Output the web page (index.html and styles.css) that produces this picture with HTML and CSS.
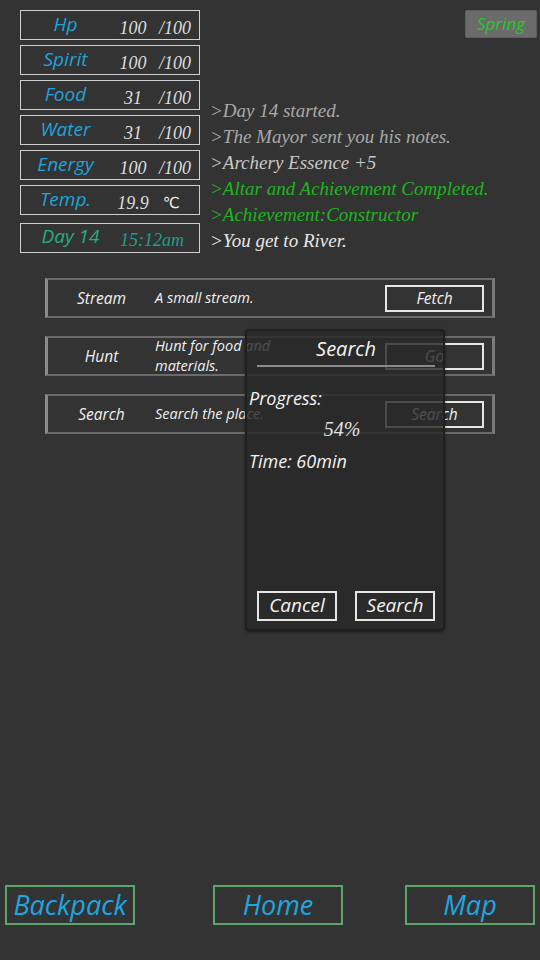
FILE: index.html
```html
<!DOCTYPE html>
<html>
<head>
<meta charset="utf-8">
<link rel="stylesheet" href="styles.css">
</head>
<body>
<div class="page">
  <div class="top">
    <div class="stats">
      <div class="stat"><span class="lbl">Hp</span><span class="val">100</span><span class="max">/100</span></div>
      <div class="stat"><span class="lbl">Spirit</span><span class="val">100</span><span class="max">/100</span></div>
      <div class="stat"><span class="lbl">Food</span><span class="val">31</span><span class="max">/100</span></div>
      <div class="stat"><span class="lbl">Water</span><span class="val">31</span><span class="max">/100</span></div>
      <div class="stat"><span class="lbl">Energy</span><span class="val">100</span><span class="max">/100</span></div>
      <div class="stat"><span class="lbl">Temp.</span><span class="val">19.9</span><span class="unit">℃</span></div>
      <div class="stat day"><span class="dlbl">Day 14</span><span class="time">15:12am</span></div>
    </div>
    <div class="log">
      <div class="ln dim">&gt;Day 14 started.</div>
      <div class="ln dim">&gt;The Mayor sent you his notes.</div>
      <div class="ln mid">&gt;Archery Essence +5</div>
      <div class="ln grn">&gt;Altar and Achievement Completed.</div>
      <div class="ln grn">&gt;Achievement:Constructor</div>
      <div class="ln wht">&gt;You get to River.</div>
    </div>
    <div class="season">Spring</div>
  </div>

  <div class="actions">
    <div class="row"><span class="name">Stream</span><span class="desc">A small stream.</span><span class="btn">Fetch</span></div>
    <div class="row"><span class="name">Hunt</span><span class="desc">Hunt for food and materials.</span><span class="btn">Go</span></div>
    <div class="row"><span class="name">Search</span><span class="desc">Search the place.</span><span class="btn">Search</span></div>
  </div>

  <div class="nav">
    <div class="navbtn">Backpack</div>
    <div class="navbtn home">Home</div>
    <div class="navbtn map">Map</div>
  </div>

  <div class="dialog">
    <div class="dtitle">Search</div>
    <div class="dline">Progress:</div>
    <div class="pct">54%</div>
    <div class="dline">Time: 60min</div>
    <div class="dbtns"><span class="dbtn">Cancel</span><span class="dbtn">Search</span></div>
  </div>
</div>
</body>
</html>
```

FILE: styles.css
```css
html, body {
  margin: 0;
  padding: 0;
  background: #333333;
}
.page {
  position: relative;
  width: 540px;
  height: 960px;
  display: flex;
  flex-direction: column;
  font-family: "Open Sans", "Noto Sans", sans-serif;
  font-style: italic;
  color: #e6e6e6;
}
.top {
  display: flex;
  padding: 10px 0 0 20px;
}
.stats {
  display: flex;
  flex-direction: column;
  gap: 5px;
  width: 180px;
}
.stat {
  box-sizing: border-box;
  height: 30px;
  border: 1px solid #cfcfcf;
  display: grid;
  grid-template-columns: 89px 46px 43px;
  align-items: center;
}
.lbl {
  color: #22a2d9;
  font-size: 19px;
  text-align: center;
  line-height: 24px;
  padding-bottom: 5px;
}
.val, .max, .time {
  font-family: "Liberation Serif", serif;
  font-size: 18px;
  color: #dedede;
  line-height: 28px;
}
.val { text-align: center; padding-top: 3px; }
.max { padding-left: 3px; padding-top: 3px; }
.unit {
  font-family: "DejaVu Sans", sans-serif;
  font-style: normal;
  font-size: 15px;
  padding-left: 7px;
  padding-top: 3px;
  color: #f0f0f0;
}
.stat.day {
  margin-top: 3px;
  display: flex;
  align-items: center;
}
.dlbl {
  color: #22ae82;
  font-size: 19px;
  width: 99px;
  text-align: center;
  line-height: 24px;
  padding-bottom: 5px;
}
.time {
  color: #1f9f8a;
  padding-top: 3px;
}
.log {
  align-self: flex-end;
  padding-left: 10px;
  margin-bottom: -1px;
  font-family: "Liberation Serif", serif;
  font-style: italic;
  font-size: 19px;
  white-space: nowrap;
}
.ln { line-height: 26px; }
.dim { color: #a9a9a9; }
.mid { color: #c8c8c8; }
.grn { color: #1fb41f; }
.wht { color: #e8e8e8; }
.season {
  position: absolute;
  top: 10px;
  left: 465px;
  width: 72px;
  height: 28px;
  box-sizing: border-box;
  background: #6b6b6b;
  border: 1px solid #5e5e5e;
  border-radius: 2px;
  color: #22cc22;
  font-size: 17px;
  text-align: center;
  line-height: 26px;
}
.actions {
  display: flex;
  flex-direction: column;
  gap: 18px;
  margin: 25px 0 0 45px;
  width: 450px;
}
.row {
  box-sizing: border-box;
  height: 40px;
  border: 2px solid #6a6a6a;
  border-left: 3px solid #8a8a8a;
  border-right: 3px solid #7a7a7a;
  display: flex;
  align-items: center;
}
.name {
  width: 107px;
  text-align: center;
  font-size: 15.5px;
  color: #f0f0f0;
}
.desc {
  width: 130px;
  font-size: 14.5px;
  line-height: 20px;
  color: #f0f0f0;
  margin-right: 100px;
}
.btn {
  box-sizing: border-box;
  width: 99px;
  height: 27px;
  border: 2px solid #e6e6e6;
  text-align: center;
  font-size: 15.5px;
  line-height: 22px;
  color: #f0f0f0;
}
.nav {
  margin-top: auto;
  margin-bottom: 35px;
  padding: 0 5px;
  display: flex;
}
.navbtn {
  box-sizing: border-box;
  width: 130px;
  height: 40px;
  border: 2px solid #5aa86a;
  color: #1ea6e0;
  font-size: 27px;
  line-height: 35px;
  text-align: center;
}
.home { margin-left: 78px; }
.map { margin-left: 62px; }
.dialog {
  position: absolute;
  left: 245px;
  top: 329px;
  width: 200px;
  height: 302px;
  box-sizing: border-box;
  background: rgba(40, 40, 40, 0.82);
  border: 2px solid #1f1f1f;
  border-radius: 4px;
  box-shadow: 0 1px 3px rgba(0,0,0,0.5);
  padding: 0 8px 0 2px;
  display: flex;
  flex-direction: column;
}
.dtitle {
  margin: 4px 0 0 8px;
  border-bottom: 2px solid #8a8a8a;
  text-align: center;
  font-size: 20px;
  line-height: 28px;
  padding-bottom: 2px;
  color: #f4f4f4;
}
.dline {
  font-size: 18px;
  line-height: 24px;
  color: #f2f2f2;
}
.dtitle + .dline { margin-top: 19px; }
.pct {
  font-family: "Liberation Serif", serif;
  font-size: 20px;
  text-align: center;
  line-height: 24px;
  margin: 7px 0 8px;
  color: #e0e0e0;
}
.dbtns {
  margin-top: auto;
  margin-bottom: 8px;
  padding-left: 8px;
  display: flex;
  justify-content: space-between;
}
.dbtn {
  box-sizing: border-box;
  width: 80px;
  height: 30px;
  border: 2px solid #e6e6e6;
  text-align: center;
  font-size: 19px;
  line-height: 25px;
  color: #f4f4f4;
}
```
